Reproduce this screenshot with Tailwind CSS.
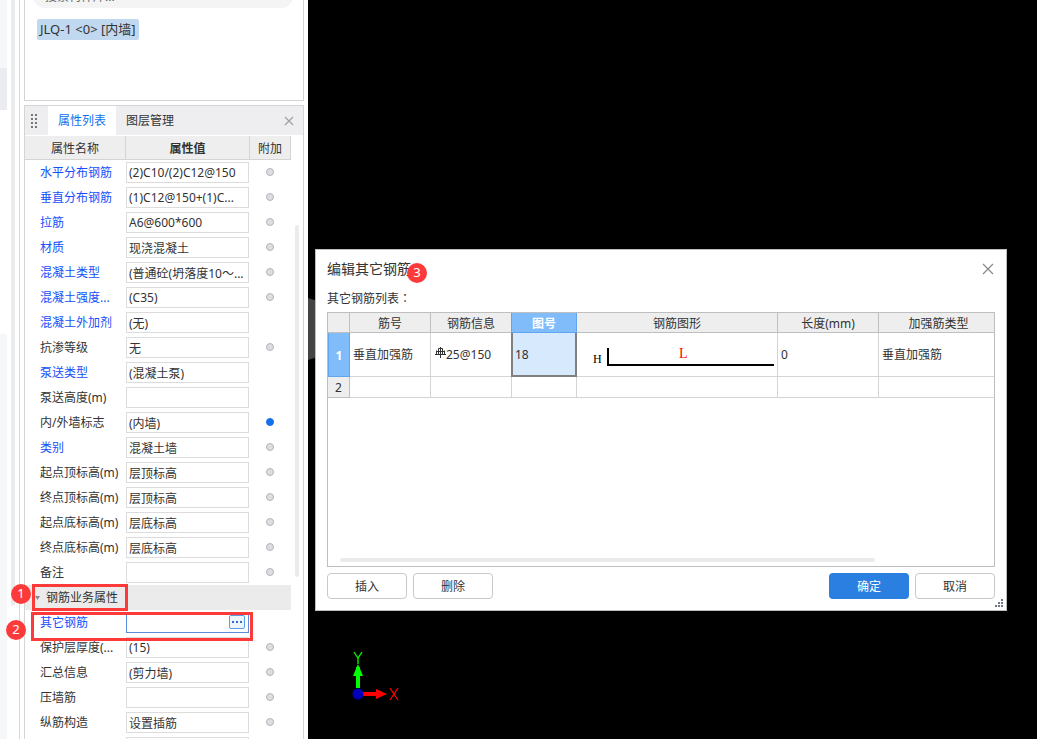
<!DOCTYPE html>
<html lang="zh-CN">
<head>
<meta charset="utf-8">
<title>属性列表 - 编辑其它钢筋</title>
<script src="https://cdn.jsdelivr.net/npm/@tailwindcss/browser@4"></script>
</head>
<body class="font-['Noto_Sans','Noto_Sans_CJK_SC',sans-serif] text-xs text-[#333]">
<main class="relative flex h-screen overflow-hidden bg-black">

  <aside class="relative flex w-77 shrink-0 bg-white">
    <div class="flex w-[7px] flex-col">
      <div class="h-17 bg-[#f6f7f9]"></div>
      <div class="h-[42px] bg-[#ebecf1]"></div>
      <div class="h-56"></div>
      <div class="flex-1 bg-[#f6f7f9]"></div>
    </div>
    <div class="ml-1 h-[606px] w-1 rounded-b bg-[#ebebeb]"></div>
    <div class="ml-1 w-px bg-[#d8d8d8]"></div>

    <div class="mr-1 ml-1 flex min-w-0 flex-1 flex-col">
      <section class="flex h-[101px] shrink-0 flex-col items-start justify-end overflow-hidden border border-t-0 border-[#d4d4d4]">
        <input aria-label="搜索构件" placeholder="搜索构件库..." class="ml-2 h-6 w-[260px] shrink-0 rounded-full bg-[#f4f4f4] px-3 placeholder:text-[#666]">
        <button class="mt-[11px] mb-15 ml-3 h-[21px] shrink-0 rounded-xs bg-[#c0d9f0] px-[3px] text-[13px] whitespace-nowrap">JLQ-1 &lt;0&gt; [内墙]</button>
      </section>

      <section class="mt-1 flex min-h-0 flex-1 flex-col border border-b-0 border-[#d4d4d4]">
        <header class="flex h-[29px] shrink-0 items-stretch bg-[#eeeef0]">
          <svg class="my-auto ml-1.5 h-3.5 w-[17px]" viewBox="0 0 17 14" fill="#777" aria-hidden="true"><path d="M0 0h2v2H0zM4 0h2v2H4zM0 4h2v2H0zM4 4h2v2H4zM0 8h2v2H0zM4 8h2v2H4zM0 12h2v2H0zM4 12h2v2H4z"/></svg>
          <button class="w-17 bg-white text-[#0f73ee]">属性列表</button>
          <button class="w-17">图层管理</button>
          <button class="mr-2 ml-auto w-3" aria-label="关闭"><svg viewBox="0 0 12 12" class="size-3" fill="none" stroke="#a0a0a0" stroke-width="1.2"><path d="M2 2l8 8M10 2l-8 8"/></svg></button>
        </header>
        <div class="flex min-h-0 flex-1">
          <div class="mt-px w-[266px] overflow-hidden">
            <table class="w-full table-fixed border-separate border-spacing-0">
              <colgroup><col class="w-[101px]"><col class="w-31"><col></colgroup>
              <thead>
                <tr class="h-6 bg-[#eeeeee]">
                  <th class="border-r border-b border-[#d4d4d4] p-0 pt-0.5 font-normal">属性名称</th>
                  <th class="border-r border-b border-[#d4d4d4] p-0 pt-0.5 font-bold">属性值</th>
                  <th class="border-r border-b border-[#d4d4d4] p-0 pt-0.5 font-normal">附加</th>
                </tr>
              </thead>
              <tbody id="rows"></tbody>
            </table>
          </div>
          <div class="mt-[90px] ml-1 h-88 w-1 rounded-full bg-[#ebebeb]"></div>
        </div>
      </section>
    </div>

    <span class="absolute top-[584px] left-[11px] flex size-5 items-center justify-center rounded-full bg-[#fd3a3a] text-[13px] text-white">1</span>
    <span class="absolute top-[620px] left-[6px] flex size-5 items-center justify-center rounded-full bg-[#fd3a3a] text-[13px] text-white">2</span>
    <div class="pointer-events-none absolute top-[584px] left-8 h-[27px] w-24 border-3 border-[#fd3a3a]"></div>
    <div class="pointer-events-none absolute top-[612px] left-[31px] h-[29px] w-[222px] border-3 border-[#fd3a3a]"></div>
  </aside>

  <section class="relative min-w-0 flex-1 bg-black" aria-label="绘图区">
    <div class="absolute top-[298px] left-0 h-[62px] w-2 bg-[#444] [clip-path:polygon(0_0,100%_4%,100%_96%,0_100%)]"></div>

    <svg class="absolute top-[648px] left-10 h-14 w-14" viewBox="0 0 56 56" aria-label="坐标轴">
      <path d="M10 40V19" stroke="#0f0" stroke-width="4"/><path d="M10 16l5 12H5z" fill="#0f0"/>
      <path d="M14 46h15" stroke="#f00" stroke-width="4"/><path d="M39 46l-11-5v10z" fill="#f00"/>
      <circle cx="10" cy="46" r="5.5" fill="#00b"/>
      <path d="M6 4l4 6 4-6M10 10v6" stroke="#0f0" stroke-width="1.3" fill="none"/>
      <path d="M42 40l8 12M50 40l-8 12" stroke="#f00" stroke-width="1.3" fill="none"/>
    </svg>

    <div role="dialog" aria-labelledby="dlg" class="absolute top-[249px] right-[30px] left-[7px] flex h-[362px] flex-col border border-[#bdbdbd] bg-white px-[11px]">
      <header class="flex h-[37px] shrink-0 items-center justify-between">
        <h1 id="dlg" class="text-sm">编辑其它钢筋</h1>
        <button aria-label="关闭" class="w-3.5"><svg viewBox="0 0 14 14" class="size-3.5" fill="none" stroke="#888" stroke-width="1.2"><path d="M2 2l10 10M12 2L2 12"/></svg></button>
      </header>
      <p class="h-[25px] leading-[22px]">其它钢筋列表<span class="font-['Noto_Sans_CJK_TC',sans-serif]" lang="zh-TW">：</span></p>
      <div class="relative h-[255px] border border-[#bfbfbf]">
        <table class="w-full table-fixed border-separate border-spacing-0">
          <colgroup><col class="w-[22px]"><col class="w-[81px]"><col class="w-20"><col class="w-[66px]"><col class="w-[201px]"><col class="w-[101px]"><col></colgroup>
          <thead>
            <tr class="h-5 bg-[#eeeeee]">
              <th class="border-r border-b border-[#bfbfbf] p-0"></th>
              <th class="border-r border-b border-[#bfbfbf] p-0 pt-0.5 font-normal">筋号</th>
              <th class="border-b border-[#bfbfbf] p-0 pt-0.5 font-normal">钢筋信息</th>
              <th class="border-x border-b border-[#60a5ee] bg-[#80bbfa] p-0 pt-0.5 font-bold text-white">图号</th>
              <th class="border-r border-b border-[#bfbfbf] p-0 pt-0.5 font-normal">钢筋图形</th>
              <th class="border-r border-b border-[#bfbfbf] p-0 pt-0.5 font-normal">长度(mm)</th>
              <th class="border-b border-[#bfbfbf] p-0 pt-0.5 pl-1 font-normal">加强筋类型</th>
            </tr>
          </thead>
          <tbody>
            <tr class="h-11">
              <th class="border border-t-0 border-[#60a5ee] bg-[#80bbfa] p-0 pt-0.5 font-bold text-white">1</th>
              <td class="border-r border-b border-[#d4d4d4] p-0 pl-[3px]">垂直加强筋</td>
              <td class="border-b border-[#d4d4d4] p-0 pl-1">
                <div class="flex items-center"><svg class="mb-1 h-3 w-[11px]" viewBox="0 0 11 12" fill="none" stroke="#333" aria-hidden="true"><path d="M5.5 0v11M3.5 1.500v6M7.500 1.500v6M3.500 1.500h4M1.500 3.500v4M9.500 3.500v4M1 4.500h9M0 7.500h11"/></svg>25@150</div>
              </td>
              <td class="border-2 border-t-0 border-[#808080] bg-[#d6e9fd] p-0 pt-0.5 pl-0.5">18</td>
              <td class="border-r border-b border-[#d4d4d4] p-0">
                <svg class="h-10 w-full" viewBox="0 0 200 40" aria-label="L形钢筋"><path d="M31 13v17h166" fill="none" stroke="#000" stroke-width="2"/><text x="16" y="28" font-family="Liberation Serif" font-size="12">H</text><text x="102" y="23" font-family="Liberation Serif" font-size="14" fill="#f00">L</text></svg>
              </td>
              <td class="border-r border-b border-[#d4d4d4] p-0 pl-[3px]">0</td>
              <td class="border-b border-[#d4d4d4] p-0 pl-[3px]">垂直加强筋</td>
            </tr>
            <tr class="h-[21px]">
              <th class="border-r border-b border-[#bfbfbf] bg-[#eeeeee] p-0 pt-0.5 font-normal">2</th>
              <td class="border-r border-b border-[#d4d4d4] p-0"></td>
              <td class="border-b border-[#d4d4d4] p-0"></td>
              <td class="border-x border-b border-[#d4d4d4] p-0"></td>
              <td class="border-r border-b border-[#d4d4d4] p-0"></td>
              <td class="border-r border-b border-[#d4d4d4] p-0"></td>
              <td class="border-b border-[#d4d4d4] p-0"></td>
            </tr>
          </tbody>
        </table>
        <div class="absolute right-[119px] bottom-1 left-3 h-1 rounded-full bg-[#ebebeb]"></div>
      </div>
      <footer class="mt-1.5 flex gap-1.5">
        <button class="h-[26px] w-20 rounded-sm border border-[#c9c9c9] pt-0.5">插入</button>
        <button class="h-[26px] w-20 rounded-sm border border-[#c9c9c9] pt-0.5">删除</button>
        <button class="ml-auto h-[26px] w-20 rounded-sm bg-[#2b7fe1] pt-0.5 text-white">确定</button>
        <button class="h-[26px] w-20 rounded-sm border border-[#c9c9c9] pt-0.5">取消</button>
      </footer>
      <svg class="absolute right-[3px] bottom-[3px] size-2" viewBox="0 0 8 8" fill="#707580" aria-hidden="true"><path d="M0 6h2v2H0zM3 6h2v2H3zM6 6h2v2H6zM3 3h2v2H3zM6 3h2v2H6zM6 0h2v2H6z"/></svg>
      <span class="absolute top-[13px] left-[91px] flex size-5 items-center justify-center rounded-full bg-[#fd3a3a] text-[13px] text-white">3</span>
    </div>
  </section>
</main>
<script>
// [name, value, blue name, marker: 0 none / 1 off / 2 on]
const props = [
  ['水平分布钢筋', '(2)C10/(2)C12@150', 1, 1],
  ['垂直分布钢筋', '(1)C12@150+(1)C...', 1, 1],
  ['拉筋', 'A6@600*600', 1, 1],
  ['材质', '现浇混凝土', 1, 1],
  ['混凝土类型', '(普通砼(坍落度10～...', 1, 1],
  ['混凝土强度...', '(C35)', 1, 1],
  ['混凝土外加剂', '(无)', 1, 0],
  ['抗渗等级', '无', 0, 1],
  ['泵送类型', '(混凝土泵)', 1, 0],
  ['泵送高度(m)', '', 0, 0],
  ['内/外墙标志', '(内墙)', 0, 2],
  ['类别', '混凝土墙', 1, 1],
  ['起点顶标高(m)', '层顶标高', 0, 1],
  ['终点顶标高(m)', '层顶标高', 0, 1],
  ['起点底标高(m)', '层底标高', 0, 1],
  ['终点底标高(m)', '层底标高', 0, 1],
  ['备注', '', 0, 1],
  null,
  ['其它钢筋', '', 1, 0],
  ['保护层厚度(...', '(15)', 0, 1],
  ['汇总信息', '(剪力墙)', 0, 1],
  ['压墙筋', '', 0, 1],
  ['纵筋构造', '设置插筋', 0, 1],
  ['', '', 0, 0],
];
document.getElementById('rows').innerHTML = props.map((p, i) => {
  if (!p) return `<tr class="h-[25px]"><td colspan="3" class="bg-[#ebebeb] p-0 pl-2.5"><button class="flex items-center gap-1.5"><svg class="h-1 w-[5px]" viewBox="0 0 5 4" fill="#888"><path d="M0 0h5L2.500 4z"/></svg>钢筋业务属性</button></td></tr>`;
  const [name, value, blue, mark] = p;
  const active = name === '其它钢筋';
  return `<tr class="h-[25px]">
    <td class="p-0 pl-[15px] whitespace-nowrap ${blue ? 'text-[#1450fa]' : 'text-[#333]'}"><label for="p${i}">${name}</label></td>
    <td class="p-0"><div class="flex h-[21px] w-[123px] items-center border bg-white ${active ? 'border-[#5b8bd8]' : 'border-[#dcdcdc]'}">
      <input id="p${i}" value="${value}" class="h-full w-full min-w-0 pl-0.5 outline-none">
      ${active ? '<button aria-label="更多" class="mr-[3px] mb-0.5 flex h-3.5 w-4 shrink-0 items-center justify-center gap-0.5 rounded-xs border border-[#5a9de8] bg-[#eef5fd]"><i class="size-0.5 bg-[#2b6fd0]"></i><i class="size-0.5 bg-[#2b6fd0]"></i><i class="size-0.5 bg-[#2b6fd0]"></i></button>' : ''}
    </div></td>
    <td class="p-0 pr-0.5 pb-0.5">${mark ? `<input type="checkbox" aria-label="附加 ${name}" ${mark === 2 ? 'checked' : ''} class="mx-auto block size-2 appearance-none rounded-full border border-[#b4b5b9] bg-[#dddee2] checked:border-[#1571ea] checked:bg-[#1571ea]">` : ''}</td>
  </tr>`;
}).join('');
</script>
</body>
</html>
